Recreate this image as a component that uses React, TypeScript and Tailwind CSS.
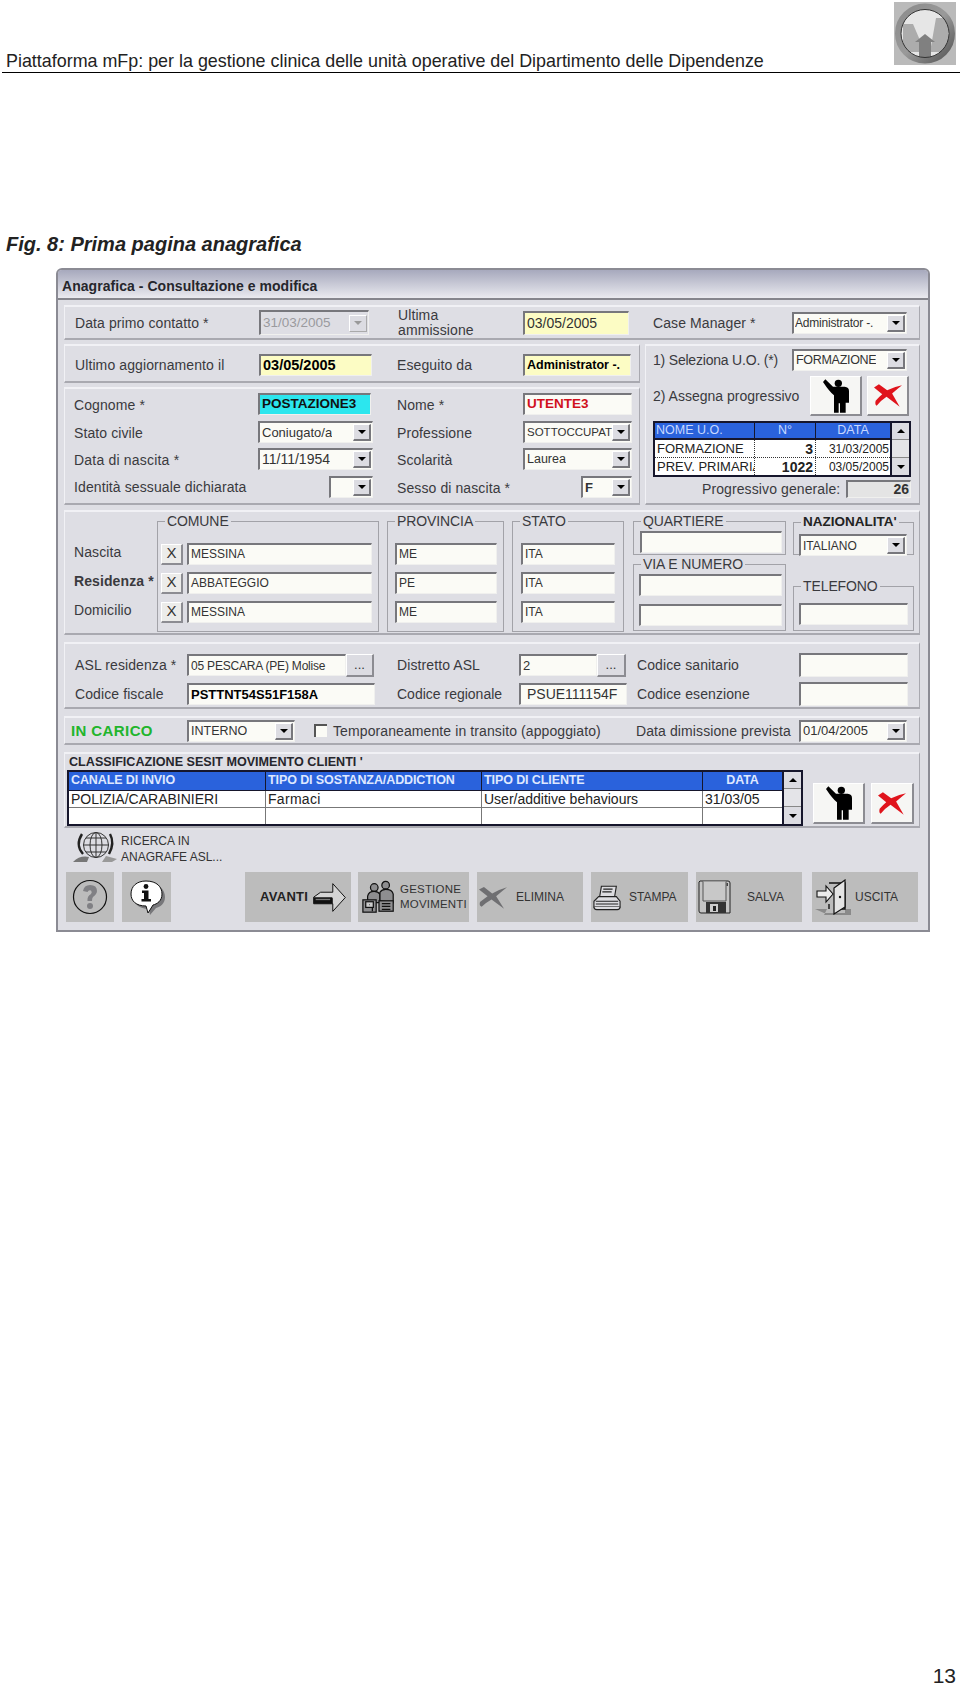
import React from "react";
import {twMerge} from "tailwind-merge";

const Label = ({className = "", children}: {className?: string; children: React.ReactNode}) => (
    <div className={twMerge("shrink-0 whitespace-nowrap text-[14px] leading-[16px] tracking-[0.1px] text-[#3a3a3e]", className)}>{children}</div>
);

const Field = ({className = "", children}: {className?: string; children?: React.ReactNode}) => (
    <div className={twMerge("shrink-0 h-[22px] flex items-center overflow-hidden whitespace-nowrap bg-[#fbfbf6] border-t-2 border-l-2 border-t-[#77777c] border-l-[#77777c] border-b border-r border-b-[#f0f0ee] border-r-[#f0f0ee] pl-[2px] text-[14px] text-[#333]", className)}>
        {children}
    </div>
);

const Arrow = () => (
    <div className="w-[18px] h-[17px] shrink-0 flex items-center justify-center bg-[#dcdce2] border-r-2 border-b-2 border-r-[#77777c] border-b-[#77777c] border-t border-l border-t-white border-l-white">
        <div className="w-0 h-0 border-l-[4px] border-r-[4px] border-t-[4px] border-l-transparent border-r-transparent border-t-black" />
    </div>
);

const Combo = ({className = "", children, disabled}: {className?: string; children?: React.ReactNode; disabled?: boolean}) => (
    <div className={twMerge("shrink-0 h-[22px] flex items-center justify-between overflow-hidden whitespace-nowrap bg-[#fbfbf6] border-t-2 border-l-2 border-t-[#77777c] border-l-[#77777c] border-b border-r border-b-[#f0f0ee] border-r-[#f0f0ee] pl-[2px] pr-[1px] text-[14px] text-[#333]", className)}>
        <span className="overflow-hidden">{children}</span>
        {disabled ? (
            <div className="w-[18px] h-[17px] shrink-0 flex items-center justify-center bg-[#dcdce2] border-r border-b border-r-[#aaa] border-b-[#aaa] border-t border-l border-t-white border-l-white">
                <div className="w-0 h-0 border-l-[4px] border-r-[4px] border-t-[4px] border-l-transparent border-r-transparent border-t-[#999]" />
            </div>
        ) : <Arrow/>}
    </div>
);

const Raised = ({className = "", children}: {className?: string; children?: React.ReactNode}) => (
    <div className={twMerge("shrink-0 flex items-center justify-center bg-[#f6f6f4] border-t border-l border-t-white border-l-white border-b-2 border-r-2 border-b-[#8c8c92] border-r-[#8c8c92]", className)}>
        {children}
    </div>
);

const Panel = ({className = "", children}: {className?: string; children: React.ReactNode}) => (
    <div className={twMerge("border-t-2 border-l border-t-[#f1f1f5] border-l-[#f1f1f5] border-b-2 border-r border-b-[#a9a9b0] border-r-[#a9a9b0] bg-[#dedee4]", className)}>
        {children}
    </div>
);

const Box = ({title, className = "", legend = "", children}: {title: string; className?: string; legend?: string; children?: React.ReactNode}) => (
    <fieldset className={twMerge("shrink-0 border border-[#a2a2a8]", className)}>
        <legend className={twMerge("ml-[7px] px-[2px] text-[14px] leading-[18px] tracking-[-0.1px] text-[#3a3a3e]", legend)}>{title}</legend>
        {children}
    </fieldset>
);

const PersonIcon = () => (
    <svg viewBox="0 0 78 100" className="w-[26px] h-[34px]">
        <path fill="#000" d="M0 8 L7 0 L30 22 H65 Q78 23 78 35 V70 H68 V100 H51 V72 H47 V100 H33 V48 Q20 38 0 8 Z"/>
        <circle cx="46" cy="12" r="11" fill="#000"/>
    </svg>
);

const RedX = () => (
    <svg viewBox="0 0 85 68" className="w-[28px] h-[23px]">
        <path fill="#e0141c" d="M0 10 L15 0 L40 18 Q60 8 85 3 Q70 15 55 28 L78 68 L38 38 Q20 50 8 65 Q2 62 5 50 Q15 38 25 30 Z"/>
    </svg>
);

const GlobeIcon = () => (
    <svg viewBox="0 0 46 32" className="w-[46px] h-[32px] shrink-0">
        <g fill="none" stroke="#333" strokeWidth="1">
            <circle cx="24" cy="14" r="12.5" fill="#dcdce2"/>
            <ellipse cx="24" cy="14" rx="6" ry="12.5"/>
            <path d="M11.5 14 H36.5 M14 7 H34 M14 21 H34 M24 1.5 V26.5"/>
        </g>
        <path d="M10 3 Q3 14 11 23" fill="none" stroke="#222" strokeWidth="2.4"/>
        <path d="M38 3 Q43 12 37 23" fill="none" stroke="#222" strokeWidth="2.4"/>
        <path d="M1 31 Q8 24 17 26 L15 31 Z" fill="#777"/>
        <path d="M30 31 L34 25 L45 28 L40 31 Z" fill="#999"/>
    </svg>
);

const QuestionIcon = () => (
    <svg viewBox="0 0 36 36" className="w-[36px] h-[36px]">
        <circle cx="18" cy="18" r="16.5" fill="none" stroke="#111" strokeWidth="1.2"/>
        <path d="M11 12 Q12 6 18 6 Q25 6 25 12 Q25 15 21 18 Q20 19 20 22 L15.5 22 Q15 17 19 15 Q20.5 13 19 11.5 Q16.5 10.5 15.5 13 Z" fill="#808084"/>
        <circle cx="18" cy="27" r="3" fill="#808084"/>
    </svg>
);

const InfoIcon = () => (
    <svg viewBox="0 0 36 38" className="w-[36px] h-[38px]">
        <path d="M20 6 C31 6 36 12 36 19 C36 26 31 29 27 30 L21 37 L20 31 C10 31 5 26 5 19 C5 11 11 6 20 6 Z" fill="#77777a"/>
        <path d="M17 3 C28 3 33 9 33 16 C33 23 28 26 24 27 L19 35 L17 28 C7 28 2 23 2 16 C2 8 8 3 17 3 Z" fill="#fff" stroke="#111" strokeWidth="1"/>
        <circle cx="17" cy="8.5" r="2.4" fill="#111"/>
        <path d="M13 12.5 H19.5 V21 H22 V23.5 H12.5 V21 H15 V15 H13 Z" fill="#111"/>
    </svg>
);

const ArrowIcon = () => (
    <svg viewBox="0 0 100 88" className="w-[33px] h-[29px] shrink-0">
        <path d="M23 28 H60 V2 L98 44 L60 86 V63 H2 V43 Z" fill="#d4d4d4" stroke="#111" strokeWidth="3"/>
        <path d="M2 43 H58 L60 47 V63 H2 Z" fill="#111"/>
        <path d="M8 48 H52 V52 H8 Z" fill="#777"/>
    </svg>
);

const PeopleIcon = () => (
    <svg viewBox="0 0 38 36" className="w-[36px] h-[36px] shrink-0">
        <g fill="#8e8e90" stroke="#111" strokeWidth="1.3">
            <circle cx="14" cy="8" r="4"/>
            <circle cx="26" cy="5.5" r="4"/>
            <path d="M7 24 V17 Q8 12 14 12 Q18 12 20 15 V24 Z"/>
            <path d="M20 22 V13 Q22 10 26 10 Q33 10 34 15 V24 Z"/>
            <rect x="2" y="21" width="14" height="13"/>
            <rect x="5" y="23" width="8" height="6" fill="#ccc"/>
            <rect x="19" y="22" width="15" height="11"/>
            <path d="M22 25 H31 M22 28 H31 M22 31 H31 M9 26 H9.5 M12 33 V29"/>
        </g>
    </svg>
);

const CutIcon = () => (
    <svg viewBox="0 0 85 68" className="w-[28px] h-[23px] shrink-0">
        <path d="M0 10 L15 2 L40 22 Q60 10 85 3 Q70 15 52 30 L76 68 L38 40 Q20 50 8 62 Q0 60 3 48 Q15 38 26 30 Z" fill="#6f6f72"/>
    </svg>
);

const PrinterIcon = () => (
    <svg viewBox="0 0 30 28" className="w-[28px] h-[27px] shrink-0">
        <g fill="#dcdce0" stroke="#222" strokeWidth="1.2">
            <path d="M9 2 H25 L23 14 H7 Z"/>
            <path d="M6 13 H25 L29 18 V24 H1 V18 Z"/>
            <path d="M1 24 Q1 27 4 27 H26 Q29 27 29 24"/>
            <path d="M11 5 H21 M10 8 H20 M3 18 H27 M3 21 H27" fill="none"/>
        </g>
    </svg>
);

const FloppyIcon = () => (
    <svg viewBox="0 0 33 34" className="w-[33px] h-[34px] shrink-0">
        <path d="M2 1 H30 Q32 1 32 3 V33 H3 Q1 33 1 31 V2 Z" fill="#c4c4c4" stroke="#222" strokeWidth="1"/>
        <path d="M5 1.5 V21 H28 V1.5" fill="#c8c8c8" stroke="#555" strokeWidth="1"/>
        <path d="M8 22 H28 V33 H8 Z" fill="#333"/>
        <path d="M12 24 H20 V32 H12 Z" fill="#ccc"/>
        <rect x="15" y="26" width="3" height="5" fill="#222"/>
        <rect x="28.5" y="3" width="1.5" height="3" fill="#444"/>
    </svg>
);

const DoorIcon = () => (
    <svg viewBox="0 0 36 36" className="w-[36px] h-[36px] shrink-0">
        <path d="M0 30 H12 L9 36 H36 V30 H30 V34 H9 Z" fill="#8a8a8a"/>
        <path d="M14 4 H30 V30 H25" fill="none" stroke="#111" strokeWidth="1.4"/>
        <path d="M19 9 L30 1 V28 L19 35 Z" fill="#e4e4e4" stroke="#111" strokeWidth="1.2"/>
        <path d="M14 30 V25" stroke="#111" strokeWidth="1.4"/>
        <circle cx="25" cy="18" r="1.2" fill="#111"/>
        <path d="M2 12 H11 V7 L18 15 L11 23 V18 H2 Z" fill="#ececec" stroke="#111" strokeWidth="1.1"/>
    </svg>
);

const Logo = () => (
    <svg viewBox="0 0 62 63" className="w-[62px] h-[63px]">
        <defs>
            <linearGradient id="logoRing" x1="0" y1="0" x2="1" y2="1">
                <stop offset="0" stopColor="#8b8b8b"/>
                <stop offset="0.5" stopColor="#9a9a9a"/>
                <stop offset="1" stopColor="#555"/>
            </linearGradient>
        </defs>
        <rect width="62" height="63" fill="#bababa"/>
        <circle cx="31" cy="31.5" r="26" fill="#e6e6e6"/>
        <path d="M9 22 H19 L31 50 L36 50 L42 16 H54 V50 H9 Z" fill="#acacac"/>
        <path d="M21 40 L31 32 L41 40 H37 V58 H25 V40 Z" fill="#808080"/>
        <circle cx="31" cy="31.5" r="27" fill="none" stroke="url(#logoRing)" strokeWidth="6"/>
        <circle cx="31" cy="31.5" r="24" fill="none" stroke="#333" strokeWidth="1"/>
    </svg>
);

const Scroll = () => (
    <div className="w-[19px] shrink-0 flex flex-col justify-between bg-[#e4e4e8] border-l-2 border-l-[#16162c]">
        <div className="h-[17px] flex items-center justify-center bg-[#dcdce2] border-b border-b-[#888]">
            <div className="w-0 h-0 border-l-[4px] border-r-[4px] border-b-[4px] border-l-transparent border-r-transparent border-b-black" />
        </div>
        <div className="h-[18px] flex items-center justify-center bg-[#dcdce2] border-t border-t-[#888]">
            <div className="w-0 h-0 border-l-[4px] border-r-[4px] border-t-[4px] border-l-transparent border-r-transparent border-t-black" />
        </div>
    </div>
);

const Bottom = ({className = "", children}: {className?: string; children: React.ReactNode}) => (
    <div className={twMerge("shrink-0 h-[50px] flex items-center bg-[#bcbcbc] text-[12px] text-[#333] whitespace-nowrap", className)}>
        {children}
    </div>
);

const App = () => {
    return (
        <div className="min-h-[1687px] flex flex-col bg-white font-['Liberation_Sans',Arial,sans-serif]">
            <div className="ml-[2px] h-[73px] pt-[2px] pr-[4px] flex justify-between items-start border-b border-b-black">
                <div className="mt-[49px] pl-[4px] text-[17.9px] leading-[20px] text-[#222]">Piattaforma mFp: per la gestione clinica delle unità operative del Dipartimento delle Dipendenze</div>
                <Logo/>
            </div>
            <div className="mt-[159px] pl-[6px] text-[20px] leading-[24px] font-bold italic text-[#222]">Fig. 8: Prima pagina anagrafica</div>

            <div className="mt-[12px] ml-[56px] w-[874px] h-[664px] bg-[#dedee4] rounded-t-[6px] border-2 border-[#8b8b94] flex flex-col">
                <div className="h-[30px] shrink-0 rounded-t-[4px] pl-[4px] pt-[7px] bg-gradient-to-b from-[#a7a9bd] to-[#eaeaef] text-[14px] leading-[18px] font-bold tracking-[0.05px] text-[#26262c] border-b-2 border-b-[#85858c]">
                    Anagrafica - Consultazione e modifica
                </div>

                <div className="pl-[6px] pr-[8px] pt-[5px]">
                    <Panel className="h-[35px] pl-[10px] flex items-center">
                        <Label className="w-[184px]">Data primo contatto *</Label>
                        <Combo disabled className="w-[110px] h-[25px] bg-[#dedee4] text-[#9a9a9e] text-[13.5px]">31/03/2005</Combo>
                        <Label className="ml-[29px] w-[125px] leading-[15px]">Ultima<br/>ammissione</Label>
                        <Field className="w-[106px] h-[24px] bg-[#fcfcc4]">03/05/2005</Field>
                        <Label className="ml-[24px] w-[139px]">Case Manager *</Label>
                        <Combo className="w-[115px] pl-[1px] text-[12px] tracking-[-0.2px]">Administrator -.</Combo>
                    </Panel>

                    <div className="mt-[4px] flex gap-[5px] h-[161px]">
                        <div className="w-[576px] flex flex-col gap-[4px]">
                            <Panel className="h-[39px] pl-[10px] pt-[3px] flex items-center">
                                <Label className="w-[184px]">Ultimo aggiornamento il</Label>
                                <Field className="w-[113px] bg-[#fcfcc4] font-bold text-[14.5px] text-black">03/05/2005</Field>
                                <Label className="ml-[25px] w-[126px]">Eseguito da</Label>
                                <Field className="w-[108px] bg-[#fcfcc4] font-bold text-[12.5px] text-black">Administrator -.</Field>
                            </Panel>
                            <Panel className="h-[118px] pl-[9px] pt-[4px]">
                                <div className="flex items-center">
                                    <div className="w-[323px] flex items-center">
                                        <Label className="w-[184px] mt-[2px]">Cognome *</Label>
                                        <Field className="w-[113px] bg-[#2ce6ee] font-bold text-[13.5px] text-[#111]">POSTAZIONE3</Field>
                                    </div>
                                    <Label className="w-[126px] mt-[2px]">Nome *</Label>
                                    <Field className="w-[109px] font-bold text-[13.5px] text-[#d0101c]">UTENTE3</Field>
                                </div>
                                <div className="mt-[6px] flex items-center">
                                    <div className="w-[323px] flex items-center">
                                        <Label className="w-[184px] mt-[2px]">Stato civile</Label>
                                        <Combo className="w-[115px] text-[13px]">Coniugato/a</Combo>
                                    </div>
                                    <Label className="w-[126px] mt-[2px]">Professione</Label>
                                    <Combo className="w-[109px] text-[11.5px]">SOTTOCCUPAT</Combo>
                                </div>
                                <div className="mt-[5px] flex items-center">
                                    <div className="w-[323px] flex items-center">
                                        <Label className="w-[184px] mt-[2px] tracking-[0.2px]">Data di nascita *</Label>
                                        <Combo className="w-[115px]">11/11/1954</Combo>
                                    </div>
                                    <Label className="w-[126px] mt-[2px]">Scolarità</Label>
                                    <Combo className="w-[109px] text-[12.5px]">Laurea</Combo>
                                </div>
                                <div className="mt-[6px] flex items-center">
                                    <div className="w-[323px] flex items-center">
                                        <Label className="w-[255px]">Identità sessuale dichiarata</Label>
                                        <Combo className="w-[44px]"></Combo>
                                    </div>
                                    <Label className="w-[184px] mt-[2px]">Sesso di nascita *</Label>
                                    <Combo className="w-[51px] font-bold text-[13px]">F</Combo>
                                </div>
                            </Panel>
                        </div>

                        <Panel className="w-[275px] pl-[7px] pt-[3px]">
                            <div className="flex items-center">
                                <Label className="w-[139px] tracking-[-0.2px]">1) Seleziona U.O. (*)</Label>
                                <Combo className="w-[115px] text-[12.5px] tracking-[-0.3px]">FORMAZIONE</Combo>
                            </div>
                            <div className="mt-[5px] flex items-center">
                                <Label className="w-[157px] tracking-[0px]">2) Assegna progressivo</Label>
                                <Raised className="w-[52px] h-[40px]"><PersonIcon/></Raised>
                                <Raised className="ml-[5px] w-[42px] h-[40px]"><RedX/></Raised>
                            </div>
                            <div className="mt-[5px] w-[258px] h-[56px] flex border-2 border-[#16162c] bg-white">
                                <div className="flex-grow flex flex-col text-[13px] text-[#222]">
                                    <div className="h-[17px] flex bg-[#2a62dc] border-b-2 border-b-[#16162c] text-[12.5px] leading-[15px] text-[#c8d8ff]">
                                        <div className="w-[100px] pl-[1px] border-r border-r-[#16162c]">NOME U.O.</div>
                                        <div className="w-[61px] text-center border-r border-r-[#16162c]">N°</div>
                                        <div className="flex-grow text-center">DATA</div>
                                    </div>
                                    <div className="h-[18px] flex leading-[18px] border-b border-dotted border-b-[#333]">
                                        <div className="w-[100px] pl-[2px] overflow-hidden whitespace-nowrap border-r border-dotted border-r-[#333]">FORMAZIONE</div>
                                        <div className="w-[61px] pr-[2px] text-right text-[14px] font-bold border-r border-dotted border-r-[#333]">3</div>
                                        <div className="flex-grow text-right text-[12px] pr-[1px]">31/03/2005</div>
                                    </div>
                                    <div className="h-[17px] flex leading-[18px]">
                                        <div className="w-[100px] pl-[2px] overflow-hidden whitespace-nowrap border-r border-dotted border-r-[#333]">PREV. PRIMARIA</div>
                                        <div className="w-[61px] pr-[2px] text-right text-[14px] font-bold border-r border-dotted border-r-[#333]">1022</div>
                                        <div className="flex-grow text-right text-[12px] pr-[1px]">03/05/2005</div>
                                    </div>
                                </div>
                                <Scroll/>
                            </div>
                            <div className="mt-[3px] pl-[49px] flex items-center">
                                <Label className="w-[144px]">Progressivo generale:</Label>
                                <Field className="w-[65px] h-[18px] justify-end pr-[1px] bg-[#e4e4e4] font-bold text-[14px]">26</Field>
                            </div>
                        </Panel>
                    </div>

                    <Panel className="mt-[5px] h-[125px] flex items-start">
                        <div className="w-[92px] pl-[9px] pt-[29px] shrink-0">
                            <Label className="h-[22px] leading-[22px]">Nascita</Label>
                            <Label className="mt-[7px] h-[22px] leading-[22px] font-bold">Residenza *</Label>
                            <Label className="mt-[7px] h-[22px] leading-[22px]">Domicilio</Label>
                        </div>
                        <Box title="COMUNE" className="w-[222px] h-[120px]">
                            <div className="pl-[3px] pt-[13px] flex flex-col gap-[7px]">
                                {["MESSINA", "ABBATEGGIO", "MESSINA"].map((c, i) => (
                                    <div className="flex items-center" key={i}>
                                        <Raised className="w-[22px] h-[21px] bg-[#ececea] text-[15px] text-[#333]">X</Raised>
                                        <Field className="ml-[4px] w-[185px] pb-[2px] text-[12px]">{c}</Field>
                                    </div>
                                ))}
                            </div>
                        </Box>
                        <Box title="PROVINCIA" className="ml-[8px] w-[117px] h-[120px]">
                            <div className="pl-[7px] pt-[13px] flex flex-col gap-[7px]">
                                {["ME", "PE", "ME"].map((c, i) => <Field className="w-[102px] pb-[2px] text-[12px]" key={i}>{c}</Field>)}
                            </div>
                        </Box>
                        <Box title="STATO" className="ml-[8px] w-[112px] h-[120px]">
                            <div className="pl-[8px] pt-[13px] flex flex-col gap-[7px]">
                                {["ITA", "ITA", "ITA"].map((c, i) => <Field className="w-[94px] pb-[1px] text-[12px]" key={i}>{c}</Field>)}
                            </div>
                        </Box>
                        <div className="ml-[9px] w-[153px] shrink-0">
                            <Box title="QUARTIERE" className="h-[43px]">
                                <div className="pl-[6px] pt-[1px]"><Field className="w-[142px]"/></div>
                            </Box>
                            <Box title="VIA E NUMERO" className="h-[76px]">
                                <div className="pl-[5px] pt-[1px] flex flex-col gap-[8px]">
                                    <Field className="w-[143px]"/>
                                    <Field className="w-[143px]"/>
                                </div>
                            </Box>
                        </div>
                        <div className="ml-[7px] w-[121px] shrink-0">
                            <Box title="NAZIONALITA'" legend="font-bold text-[#222] text-[13.5px] tracking-[0px]" className="h-[43px]">
                                <div className="pl-[5px] pt-[2px]"><Combo className="w-[108px] text-[12px]">ITALIANO</Combo></div>
                            </Box>
                            <Box title="TELEFONO" className="mt-[22px] h-[54px]">
                                <div className="pl-[5px] pt-[8px]"><Field className="w-[109px]"/></div>
                            </Box>
                        </div>
                    </Panel>

                    <Panel className="mt-[7px] h-[67px] pl-[10px] pt-[9px]">
                        <div className="flex items-center">
                            <Label className="w-[112px]">ASL residenza *</Label>
                            <Field className="w-[159px] text-[12px] tracking-[-0.2px]">05 PESCARA (PE) Molise</Field>
                            <Raised className="w-[28px] h-[23px] bg-[#dcdce2] text-[13px] text-[#333]">...</Raised>
                            <Label className="ml-[23px] w-[122px]">Distretto ASL</Label>
                            <Field className="w-[78px] text-[13px]">2</Field>
                            <Raised className="w-[29px] h-[23px] bg-[#dcdce2] text-[13px] text-[#333]">...</Raised>
                            <Label className="ml-[11px] w-[162px]">Codice sanitario</Label>
                            <Field className="w-[109px] h-[24px]"/>
                        </div>
                        <div className="mt-[5px] flex items-center">
                            <Label className="w-[112px]">Codice fiscale</Label>
                            <Field className="w-[188px] font-bold text-[13px] text-black">PSTTNT54S51F158A</Field>
                            <Label className="ml-[22px] w-[122px] tracking-[0px]">Codice regionale</Label>
                            <Field className="w-[108px] pl-[6px] text-[14px]">PSUE111154F</Field>
                            <Label className="ml-[10px] w-[162px]">Codice esenzione</Label>
                            <Field className="w-[109px] h-[24px]"/>
                        </div>
                    </Panel>

                    <Panel className="mt-[7px] h-[29px] pl-[6px] flex items-center">
                        <div className="w-[116px] shrink-0 mt-[1px] text-[15px] font-bold tracking-[0.4px] text-[#22b52c]">IN CARICO</div>
                        <Combo className="w-[108px] text-[12.5px]">INTERNO</Combo>
                        <div className="ml-[19px] w-[13px] h-[13px] shrink-0 bg-[#fbfbf6] border-t-2 border-l-2 border-t-[#555] border-l-[#555]"/>
                        <Label className="ml-[6px] w-[303px]">Temporaneamente in transito (appoggiato)</Label>
                        <Label className="w-[163px]">Data dimissione prevista</Label>
                        <Combo className="w-[108px] text-[13px]">01/04/2005</Combo>
                    </Panel>

                    <Panel className="mt-[7px] h-[76px]">
                        <div className="pl-[4px] text-[12.6px] leading-[16px] font-bold text-[#26262c]">CLASSIFICAZIONE SESIT MOVIMENTO CLIENTI '</div>
                        <div className="ml-[2px] flex items-start">
                            <div className="w-[736px] h-[56px] flex border-2 border-[#16162c] bg-white">
                                <div className="flex-grow flex flex-col text-[14px] text-[#222]">
                                    <div className="h-[18px] flex bg-[#2a62dc] text-[12.5px] leading-[17px] font-bold tracking-[-0.1px] text-[#dfe8ff]">
                                        <div className="w-[197px] pl-[2px] border-r border-r-[#16162c]">CANALE DI INVIO</div>
                                        <div className="w-[216px] pl-[2px] border-r border-r-[#16162c]">TIPO DI SOSTANZA/ADDICTION</div>
                                        <div className="w-[221px] pl-[2px] border-r border-r-[#16162c]">TIPO DI CLIENTE</div>
                                        <div className="flex-grow text-center">DATA</div>
                                    </div>
                                    <div className="h-[18px] flex leading-[17px] border-t border-b border-b-[#777] border-t-[#16162c]">
                                        <div className="w-[197px] pl-[2px] whitespace-nowrap border-r border-r-[#777]">POLIZIA/CARABINIERI</div>
                                        <div className="w-[216px] pl-[2px] tracking-[0.3px] border-r border-r-[#777]">Farmaci</div>
                                        <div className="w-[221px] pl-[2px] border-r border-r-[#777]">User/additive behaviours</div>
                                        <div className="flex-grow pl-[2px]">31/03/05</div>
                                    </div>
                                    <div className="flex-grow flex">
                                        <div className="w-[197px] border-r border-r-[#777]"/>
                                        <div className="w-[216px] border-r border-r-[#777]"/>
                                        <div className="w-[221px] border-r border-r-[#777]"/>
                                    </div>
                                </div>
                                <Scroll/>
                            </div>
                            <Raised className="mt-[13px] ml-[10px] w-[52px] h-[41px]"><PersonIcon/></Raised>
                            <Raised className="mt-[13px] ml-[6px] w-[43px] h-[41px]"><RedX/></Raised>
                        </div>
                    </Panel>

                    <div className="mt-[3px] ml-[8px] h-[32px] flex items-center">
                        <GlobeIcon/>
                        <div className="ml-[3px] mt-[3px] text-[12px] leading-[16px] text-[#333]">RICERCA IN<br/>ANAGRAFE ASL...</div>
                    </div>

                    <div className="mt-[9px] ml-[2px] flex">
                        <Bottom className="w-[48px] justify-center"><QuestionIcon/></Bottom>
                        <Bottom className="ml-[8px] w-[49px] justify-center"><InfoIcon/></Bottom>
                        <Bottom className="ml-[74px] w-[106px] pl-[15px] gap-[5px]"><span className="font-bold text-[13px] tracking-[0.3px] text-[#222]">AVANTI</span><ArrowIcon/></Bottom>
                        <Bottom className="ml-[7px] w-[111px] pl-[3px] gap-[3px]"><PeopleIcon/><span className="text-[11.5px] leading-[15px] tracking-[0.2px]">GESTIONE<br/>MOVIMENTI</span></Bottom>
                        <Bottom className="ml-[8px] w-[106px] pl-[2px] gap-[9px]"><CutIcon/><span>ELIMINA</span></Bottom>
                        <Bottom className="ml-[8px] w-[97px] pl-[2px] gap-[8px]"><PrinterIcon/><span>STAMPA</span></Bottom>
                        <Bottom className="ml-[8px] w-[106px] pl-[2px] gap-[16px]"><FloppyIcon/><span>SALVA</span></Bottom>
                        <Bottom className="ml-[10px] w-[106px] pl-[3px] gap-[4px]"><DoorIcon/><span>USCITA</span></Bottom>
                    </div>
                </div>
            </div>

            <div className="mt-auto pr-[4px] text-right text-[21px] leading-[22px] text-[#222]">13</div>
        </div>
    );
};

export default App;
